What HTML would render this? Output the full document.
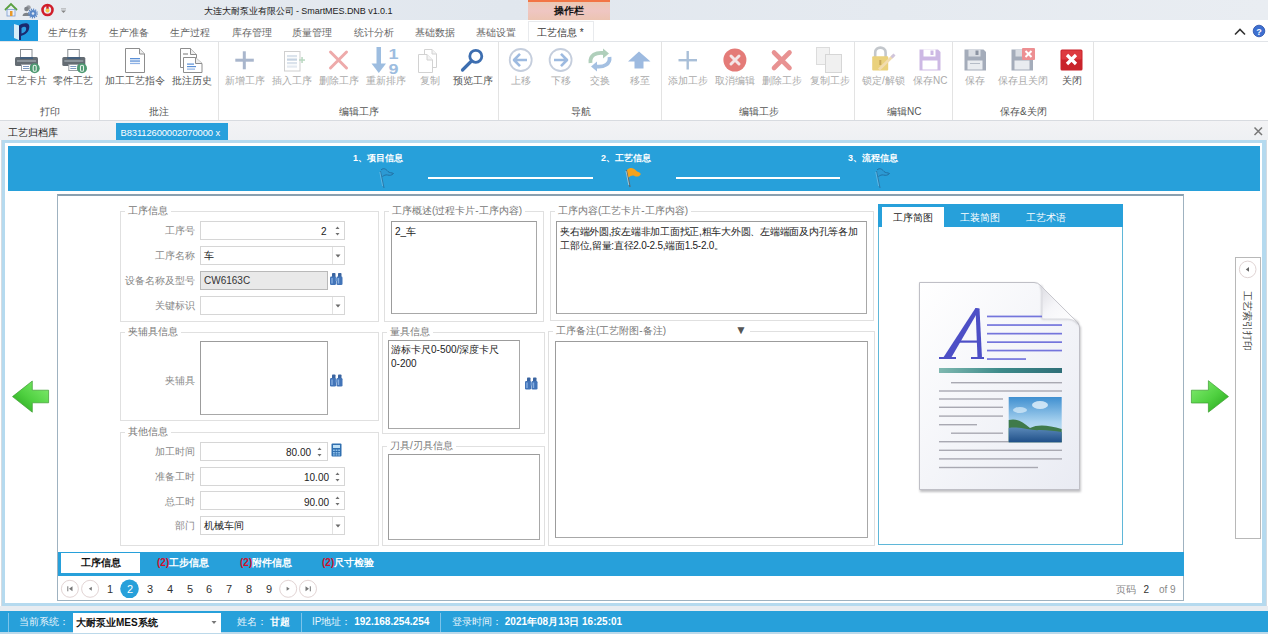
<!DOCTYPE html>
<html><head><meta charset="utf-8">
<style>
*{box-sizing:border-box;margin:0;padding:0}
html,body{width:1268px;height:634px;overflow:hidden;background:#fff;font-family:"Liberation Sans",sans-serif;font-size:10px;color:#333}
.a{position:absolute}
.t{position:absolute;white-space:nowrap;line-height:12px}
#title{left:0;top:0;width:1268px;height:20px;background:linear-gradient(90deg,#e8ecf1 0%,#e1e7ee 40%,#e9edf2 100%)}
#menu{left:0;top:20px;width:1268px;height:21px;background:#fff}
.mi{position:absolute;top:26.5px;color:#666;font-size:10px;line-height:12px}
#ribbon{left:0;top:41px;width:1268px;height:80px;background:#fff;border-top:1px solid #e1e4e8;border-bottom:1px solid #d8dbe0}
.sep{position:absolute;top:42px;width:1px;height:78px;background:#e3e3e3}
.rl{position:absolute;top:75px;font-size:10px;line-height:12px;color:#aaa;white-space:nowrap}
.rl.on{color:#555}
.gl{position:absolute;top:106px;font-size:10px;line-height:12px;color:#555;white-space:nowrap}
#docstrip{left:0;top:121px;width:1268px;height:19px;background:linear-gradient(#f3f3f5,#eef0f3)}
.gb{position:absolute;border:1px solid #e0e0e0}
.gt{position:absolute;background:#fff;color:#777;font-size:10px;line-height:12px;padding:0 3px;white-space:nowrap}
.lb{position:absolute;color:#888;font-size:10px;line-height:12px;text-align:right;white-space:nowrap}
.inp{position:absolute;border:1px solid #d6d6d6;background:#fff}
.ta{position:absolute;border:1px solid #a8a8a8;border-top-color:#9c9c9c;border-left-color:#9c9c9c;background:#fff}
</style></head><body>
<!-- title bar -->
<div id="title" class="a"></div>
<div class="t" style="left:204px;top:5px;font-size:9px;color:#222;letter-spacing:-0.05px">大连大耐泵业有限公司 - SmartMES.DNB v1.0.1</div>
<div class="a" style="left:528px;top:0;width:82px;height:20px;background:linear-gradient(#ecc9b4,#efc6c2 50%,#ecc4b2);border-top:2px solid #f27545"></div>
<div class="t" style="left:554px;top:5px;font-size:9.5px;color:#111;font-weight:bold">操作栏</div>
<!-- menu -->
<div id="menu" class="a"></div>
<div class="a" style="left:0;top:20px;width:38px;height:21px;background:#1e9be0"></div>
<div class="mi" style="left:48px">生产任务</div>
<div class="mi" style="left:109px">生产准备</div>
<div class="mi" style="left:170px">生产过程</div>
<div class="mi" style="left:232px">库存管理</div>
<div class="mi" style="left:292px">质量管理</div>
<div class="mi" style="left:354px">统计分析</div>
<div class="mi" style="left:415px">基础数据</div>
<div class="mi" style="left:476px">基础设置</div>
<div class="a" style="left:528px;top:21px;width:66px;height:21px;background:#fff;border:1px solid #e8eaed;border-bottom:none"></div>
<div class="mi" style="left:537px;color:#333">工艺信息 *</div>
<!-- ribbon -->
<div id="ribbon" class="a"></div>
<div class="sep" style="left:99px"></div>
<div class="sep" style="left:218px"></div>
<div class="sep" style="left:498px"></div>
<div class="sep" style="left:661px"></div>
<div class="sep" style="left:854px"></div>
<div class="sep" style="left:952px"></div>
<div class="sep" style="left:1093px"></div>
<div class="rl on" style="left:7px">工艺卡片</div>
<div class="rl on" style="left:53px">零件工艺</div>
<div class="rl on" style="left:105px">加工工艺指令</div>
<div class="rl on" style="left:172px">批注历史</div>
<div class="rl" style="left:225px">新增工序</div>
<div class="rl" style="left:272px">插入工序</div>
<div class="rl" style="left:319px">删除工序</div>
<div class="rl" style="left:366px">重新排序</div>
<div class="rl" style="left:420px">复制</div>
<div class="rl on" style="left:453px">预览工序</div>
<div class="rl" style="left:511px">上移</div>
<div class="rl" style="left:551px">下移</div>
<div class="rl" style="left:590px">交换</div>
<div class="rl" style="left:630px">移至</div>
<div class="rl" style="left:668px">添加工步</div>
<div class="rl" style="left:715px">取消编辑</div>
<div class="rl" style="left:762px">删除工步</div>
<div class="rl" style="left:810px">复制工步</div>
<div class="rl" style="left:862px">锁定/解锁</div>
<div class="rl" style="left:913px">保存NC</div>
<div class="rl" style="left:965px">保存</div>
<div class="rl" style="left:998px">保存且关闭</div>
<div class="rl on" style="left:1062px">关闭</div>
<div class="gl" style="left:40px">打印</div>
<div class="gl" style="left:149px">批注</div>
<div class="gl" style="left:339px">编辑工序</div>
<div class="gl" style="left:571px">导航</div>
<div class="gl" style="left:739px">编辑工步</div>
<div class="gl" style="left:887px">编辑NC</div>
<div class="gl" style="left:1000px">保存&amp;关闭</div>
<!-- doc strip -->
<div id="docstrip" class="a"></div>
<div class="t" style="left:8px;top:126.5px;color:#222">工艺归档库</div>
<div class="a" style="left:116px;top:123px;width:112px;height:17px;background:#28a0dc"></div>
<div class="t" style="left:120.5px;top:126.5px;color:#fff;font-size:9.4px;letter-spacing:-0.1px">B83112600002070000 x</div>

<!-- main frame -->
<div class="a" style="left:1px;top:140px;width:1266px;height:467px;border:1px solid #d3dbe2;border-top:none;background:#fff"></div><div class="a" style="left:2px;top:140px;width:1264px;height:466px;border:3px solid #b5daef;border-right-width:4px;background:#fff"></div>
<div class="a" style="left:8px;top:146px;width:1252px;height:45px;background:#27a0da"></div>
<div class="a" style="left:57px;top:194px;width:1127px;height:407px;border:1px solid #9fb2c0;border-top:2px solid #8aa0b0;background:#fff"></div>
<!-- status bar -->
<div class="a" style="left:0;top:606px;width:1268px;height:28px;background:#e7ecf1"></div>
<div class="a" style="left:0;top:611px;width:1268px;height:21px;background:#27a0da"></div><div class="a" style="left:0;top:632px;width:1268px;height:2px;background:#bcd9ea"></div>

<!-- column 1 -->
<div class="gb" style="left:120px;top:211px;width:259px;height:111px"></div>
<div class="gt" style="left:125px;top:205px">工序信息</div>
<div class="lb" style="left:120px;top:225px;width:75px">工序号</div>
<div class="inp" style="left:200px;top:221px;width:145px;height:19px"></div>
<div class="t" style="left:321px;top:226px;color:#222">2</div>
<div class="lb" style="left:120px;top:250px;width:75px">工序名称</div>
<div class="inp" style="left:200px;top:246px;width:145px;height:19px"></div>
<div class="a" style="left:332px;top:247px;width:1px;height:17px;background:#e2e2e2"></div>
<div class="t" style="left:204px;top:250px;color:#222">车</div>
<div class="lb" style="left:110px;top:275px;width:85px">设备名称及型号</div>
<div class="inp" style="left:200px;top:271px;width:128px;height:19px;background:#e9e9e9;border-color:#b9b9b9"></div>
<div class="t" style="left:204px;top:275px;color:#333">CW6163C</div>
<div class="lb" style="left:120px;top:300px;width:75px">关键标识</div>
<div class="inp" style="left:200px;top:296px;width:145px;height:19px"></div>
<div class="a" style="left:332px;top:297px;width:1px;height:17px;background:#e2e2e2"></div>

<div class="gb" style="left:120px;top:332px;width:259px;height:89px"></div>
<div class="gt" style="left:125px;top:326px">夹辅具信息</div>
<div class="lb" style="left:120px;top:375px;width:75px">夹辅具</div>
<div class="ta" style="left:200px;top:341px;width:128px;height:74px"></div>

<div class="gb" style="left:120px;top:432px;width:259px;height:114px"></div>
<div class="gt" style="left:125px;top:426px">其他信息</div>
<div class="lb" style="left:120px;top:446px;width:75px">加工时间</div>
<div class="inp" style="left:200px;top:442px;width:128px;height:19px"></div>
<div class="t" style="left:286px;top:447px;color:#222">80.00</div>
<div class="lb" style="left:120px;top:471px;width:75px">准备工时</div>
<div class="inp" style="left:200px;top:467px;width:145px;height:19px"></div>
<div class="t" style="left:304px;top:472px;color:#222">10.00</div>
<div class="lb" style="left:120px;top:496px;width:75px">总工时</div>
<div class="inp" style="left:200px;top:491px;width:145px;height:19px"></div>
<div class="t" style="left:304px;top:496.5px;color:#222">90.00</div>
<div class="lb" style="left:120px;top:520px;width:75px">部门</div>
<div class="inp" style="left:200px;top:516px;width:145px;height:19px"></div>
<div class="a" style="left:332px;top:517px;width:1px;height:17px;background:#e2e2e2"></div>
<div class="t" style="left:204px;top:520px;color:#222">机械车间</div>

<!-- column 2 -->
<div class="gb" style="left:384px;top:211px;width:160px;height:111px"></div>
<div class="gt" style="left:389px;top:205px">工序概述(过程卡片-工序内容)</div>
<div class="ta" style="left:391px;top:221px;width:146px;height:93px"></div>
<div class="t" style="left:395px;top:226px;color:#222">2_车</div>

<div class="gb" style="left:382px;top:332px;width:163px;height:102px"></div>
<div class="gt" style="left:387px;top:326px">量具信息</div>
<div class="ta" style="left:388px;top:340px;width:132px;height:89px"></div>
<div class="t" style="left:391px;top:343px;color:#222;line-height:14px">游标卡尺0-500/深度卡尺<br>0-200</div>

<div class="gb" style="left:382px;top:446px;width:163px;height:100px"></div>
<div class="gt" style="left:387px;top:440px">刀具/刃具信息</div>
<div class="ta" style="left:388px;top:454px;width:152px;height:86px"></div>

<!-- column 3 -->
<div class="gb" style="left:550px;top:211px;width:324px;height:110px"></div>
<div class="gt" style="left:555px;top:205px">工序内容(工艺卡片-工序内容)</div>
<div class="ta" style="left:556px;top:221px;width:311px;height:93px"></div>
<div class="t" style="left:560px;top:225px;color:#222;line-height:14px;letter-spacing:-0.25px">夹右端外圆,按左端非加工面找正,粗车大外圆、左端端面及内孔等各加<br>工部位,留量:直径2.0-2.5,端面1.5-2.0。</div>

<div class="gb" style="left:548px;top:331px;width:327px;height:215px"></div>
<div class="gt" style="left:553px;top:325px;width:196px">工序备注(工艺附图-备注)</div>
<div class="gt" style="left:732px;top:324px;color:#555;font-size:12px">▼</div>
<div class="ta" style="left:555px;top:341px;width:313px;height:197px"></div>

<!-- image panel -->
<div class="a" style="left:878px;top:204px;width:245px;height:341px;border:1px solid #5fb7d8;background:#fff"></div>
<div class="a" style="left:878px;top:204px;width:245px;height:23px;background:#27a0da"></div>
<div class="a" style="left:882px;top:207px;width:62px;height:20px;background:#fff"></div>
<div class="t" style="left:893px;top:212px;color:#222">工序简图</div>
<div class="t" style="left:960px;top:212px;color:#fff">工装简图</div>
<div class="t" style="left:1026px;top:212px;color:#fff">工艺术语</div>

<!-- bottom tabs -->
<div class="a" style="left:58px;top:552px;width:1126px;height:24px;background:#27a0da"></div>
<div class="a" style="left:61px;top:553px;width:79px;height:20px;background:#fff"></div>
<div class="t" style="left:81px;top:557px;color:#111;font-weight:bold">工序信息</div>
<div class="t" style="left:157px;top:557px;color:#fff;font-weight:bold"><span style="color:#d0102a">(2)</span>工步信息</div>
<div class="t" style="left:240px;top:557px;color:#fff;font-weight:bold"><span style="color:#d0102a">(2)</span>附件信息</div>
<div class="t" style="left:322px;top:557px;color:#fff;font-weight:bold"><span style="color:#d0102a">(2)</span>尺寸检验</div>

<!-- pager -->
<div class="t" style="left:1116px;top:583.5px;color:#888">页码</div><div class="t" style="left:1143.5px;top:583.5px;color:#333">2</div><div class="t" style="left:1159px;top:583.5px;color:#888">of 9</div>

<!-- status -->
<div class="t" style="left:19px;top:616px;color:#e8f4fb">当前系统：</div>
<div class="a" style="left:73px;top:613px;width:148px;height:20px;background:#fff"></div>
<div class="t" style="left:76px;top:617px;color:#111;font-weight:bold">大耐泵业MES系统</div>
<div class="t" style="left:237px;top:616px;color:#e8f4fb">姓名：&nbsp;<b style="color:#fff">甘超</b></div>
<div class="t" style="left:312px;top:616px;color:#e8f4fb">IP地址：&nbsp;<b style="color:#fff">192.168.254.254</b></div>
<div class="t" style="left:452px;top:616px;color:#e8f4fb">登录时间：&nbsp;<b style="color:#fff">2021年08月13日 16:25:01</b></div>
<div class="a" style="left:8px;top:613px;width:1px;height:19px;background:#7cc4ea"></div>
<div class="a" style="left:301px;top:613px;width:1px;height:19px;background:#7cc4ea"></div>
<div class="a" style="left:440px;top:613px;width:1px;height:19px;background:#7cc4ea"></div>

<!-- step header -->
<div class="t" style="left:353px;top:152px;color:#fff;font-weight:bold;font-size:9px">1、项目信息</div>
<div class="t" style="left:601px;top:152px;color:#fff;font-weight:bold;font-size:9px">2、工艺信息</div>
<div class="t" style="left:848px;top:152px;color:#fff;font-weight:bold;font-size:9px">3、流程信息</div>
<div class="a" style="left:428px;top:177px;width:165px;height:2px;background:#fff"></div>
<div class="a" style="left:676px;top:177px;width:164px;height:2px;background:#fff"></div>
<svg class="a" style="left:0;top:0" width="1268" height="634" viewBox="0 0 1268 634">
 <path d="M380.5 171 L384 188" stroke="#2f6a96" stroke-width="1.1" opacity=".7"/>
 <path d="M379.8 172 L382.6 186" stroke="#bfe3f7" stroke-width=".6" opacity=".6"/>
 <path d="M381 170 C383.5 167.5 386 169 388 171.5 C389.5 173 391.5 172.5 393.5 173.5 C392 175.5 389.5 175.5 387.5 175 C385.5 174.5 384 175.5 382.5 176.5" fill="#3b8cc6" fill-opacity=".35" stroke="#1f5f8f" stroke-width="1" opacity=".75"/>
 <path d="M626.5 170 L630 187" stroke="#5a6a72" stroke-width="1.3"/>
 <path d="M626 171 L628.8 185" stroke="#e8f0f4" stroke-width=".7" opacity=".8"/>
 <path d="M627 170 C630 166.5 634 168 636 170.5 C637.5 172.5 639.5 171.5 640.8 174 C639.5 177 636.5 177 634.5 176 C632.5 175 630.5 176 628.5 177.5 Z" fill="#f5a21c"/>
 <path d="M876.5 171 L880 188" stroke="#2f6a96" stroke-width="1.1" opacity=".7"/>
 <path d="M875.8 172 L878.6 186" stroke="#bfe3f7" stroke-width=".6" opacity=".6"/>
 <path d="M877 170 C879.5 167.5 882 169 884 171.5 C885.5 173 887.5 172.5 889.5 173.5 C888 175.5 885.5 175.5 883.5 175 C881.5 174.5 880 175.5 878.5 176.5" fill="#3b8cc6" fill-opacity=".35" stroke="#1f5f8f" stroke-width="1" opacity=".75"/>
</svg>
<!-- ribbon icons overlay -->
<svg class="a" style="left:0;top:0" width="1268" height="634" viewBox="0 0 1268 634">
 <defs>
  <g id="printer">
   <rect x="20.5" y="49.5" width="11.5" height="9" fill="#fff" stroke="#8a8f94"/>
   <rect x="15" y="57" width="23" height="9" rx="1.5" fill="#646c73"/>
   <rect x="20" y="57" width="13" height="2" fill="#44607e"/>
   <rect x="17" y="60" width="19" height="2" fill="#8b949b"/>
   <rect x="21.5" y="64.5" width="9" height="6" fill="#fff" stroke="#9aa0a6"/>
   <rect x="23" y="66" width="6" height="1" fill="#7c98c0"/>
   <rect x="23" y="68" width="6" height="1" fill="#7c98c0"/>
   <circle cx="34.7" cy="68.3" r="5" fill="#4e9a72"/>
   <rect x="33.2" y="65.3" width="3" height="6" rx="1.4" fill="none" stroke="#e8f4ec" stroke-width="1.1"/>
  </g>
  <g id="floppy">
   <path d="M0 0 H18 L21 3 V21 H0 Z" />
  </g>
 </defs>
 <use href="#printer"/>
 <use href="#printer" x="47.3"/>
 <!-- doc 加工工艺指令 -->
 <path d="M125.5 48.5 H139.5 L144.5 54 V72.5 H125.5 Z" fill="#fff" stroke="#8d8d8d"/>
 <path d="M139.5 48.5 V54 H144.5" fill="#eee" stroke="#8d8d8d"/>
 <rect x="130" y="58" width="10" height="1.3" fill="#5a8fd6"/>
 <rect x="130" y="60.4" width="10" height="1.3" fill="#5a8fd6"/>
 <rect x="130" y="62.8" width="10" height="1.3" fill="#8fb3e6"/>
 <!-- 批注历史 -->
 <path d="M180.5 48.5 H190.5 L196.5 54.5 V67.5 H180.5 Z" fill="#fff" stroke="#8d8d8d"/>
 <path d="M190.5 48.5 V54.5 H196.5" fill="#eee" stroke="#8d8d8d"/>
 <rect x="183" y="53.5" width="5" height="1" fill="#777"/>
 <path d="M183.5 57.5 H195.5 L202 63.5 V72.5 H183.5 Z" fill="#fff" stroke="#8d8d8d"/>
 <path d="M195.5 57.5 V63.5 H202" fill="#eee" stroke="#8d8d8d"/>
 <rect x="187" y="63.5" width="7" height="1.2" fill="#5a8fd6"/>
 <rect x="187" y="66" width="9" height="1.2" fill="#5a8fd6"/>
 <rect x="187" y="68.5" width="8" height="1.2" fill="#8fb3e6"/>
 <!-- 新增工序 plus -->
 <rect x="242.8" y="51.3" width="3" height="18" fill="#a9b6cc"/>
 <rect x="235.3" y="58.7" width="18.5" height="3" fill="#a9b6cc"/>
 <!-- 插入工序 -->
 <rect x="284.5" y="51.5" width="15.5" height="19.5" fill="#fff" stroke="#cfcfcf"/>
 <rect x="287" y="55" width="10" height="2.2" fill="#dbe3ec"/>
 <rect x="287" y="58.5" width="10" height="2.2" fill="#c6d3e2"/>
 <rect x="287" y="62" width="10" height="2.2" fill="#dbe3ec"/>
 <rect x="287" y="65.5" width="10" height="2.2" fill="#e4eaf1"/>
 <rect x="299" y="59.3" width="6" height="1.5" fill="#b8d8c0"/>
 <rect x="301.3" y="57" width="1.5" height="6" fill="#b8d8c0"/>
 <!-- 删除工序 X -->
 <path d="M330.5 52 L346.5 68 M346.5 52 L330.5 68" stroke="#eeaaaa" stroke-width="3" stroke-linecap="round"/>
 <!-- 重新排序 -->
 <rect x="376.5" y="47" width="4.5" height="19" fill="#9dbde0"/>
 <path d="M371.5 63.5 H386 L378.8 73 Z" fill="#9dbde0"/>
 <text x="388.5" y="58.5" font-family="Liberation Sans" font-weight="bold" font-size="15" fill="#9dbde0" textLength="10" lengthAdjust="spacingAndGlyphs">1</text>
 <text x="388.5" y="73.5" font-family="Liberation Sans" font-weight="bold" font-size="15" fill="#9dbde0" textLength="10" lengthAdjust="spacingAndGlyphs">9</text>
 <!-- 复制 -->
 <path d="M424.5 49.5 H432 L436.5 54 V67.5 H424.5 Z" fill="#fff" stroke="#d2d2d2"/>
 <path d="M418.5 54.5 H427 L432.5 60 V72.5 H418.5 Z" fill="#fff" stroke="#d2d2d2"/>
 <path d="M427 54.5 V60 H432.5" fill="#f3f3f3" stroke="#d2d2d2"/>
 <path d="M432 49.5 V54 H436.5" fill="#f3f3f3" stroke="#d2d2d2"/>
 <!-- 预览 magnifier -->
 <circle cx="475.8" cy="56.3" r="6" fill="none" stroke="#3d6eb0" stroke-width="2.8"/>
 <path d="M471.5 61 L462.5 70" stroke="#3d6eb0" stroke-width="3.2" stroke-linecap="round"/>
 <!-- 上移 / 下移 -->
 <circle cx="520.7" cy="60" r="11" fill="#fff" stroke="#c5cedd" stroke-width="1.8"/>
 <path d="M514 60 H527 M520 53.8 L514 60 L520 66.2" fill="none" stroke="#9dbae0" stroke-width="2.6" stroke-linejoin="round"/>
 <circle cx="560.6" cy="60" r="11" fill="#fff" stroke="#c5cedd" stroke-width="1.8"/>
 <path d="M554 60 H567 M561 53.8 L567 60 L561 66.2" fill="none" stroke="#9dbae0" stroke-width="2.6" stroke-linejoin="round"/>
 <!-- 交换 -->
 <path d="M590.5 63 C589.5 55 596 52 604 53" fill="none" stroke="#b0cfbb" stroke-width="3.8"/>
 <path d="M603 48.5 L609 53.5 L603 58.5 Z" fill="#b0cfbb"/>
 <path d="M609.5 57 C610.5 64 604 67.5 596 66.5" fill="none" stroke="#a4c0e2" stroke-width="3.8"/>
 <path d="M597 61.5 L591 66.5 L597 71.5 Z" fill="#a4c0e2"/>
 <!-- 移至 up arrow -->
 <path d="M639 51.5 L650.5 61.5 H643.5 V68.5 H634.5 V61.5 H628 Z" fill="#9dbae0"/>
 <!-- 添加工步 plus -->
 <rect x="686.5" y="51" width="2.4" height="18.5" fill="#a9bfd8"/>
 <rect x="678.5" y="59" width="18.5" height="2.4" fill="#a9bfd8"/>
 <!-- 取消编辑 -->
 <circle cx="734.9" cy="60" r="11.5" fill="#e47b78"/>
 <path d="M731 56 L739 64 M739 56 L731 64" stroke="#f4e6e8" stroke-width="3" stroke-linecap="round"/>
 <!-- 删除工步 -->
 <path d="M774 52.5 L789.5 68 M789.5 52.5 L774 68" stroke="#e89292" stroke-width="4.6" stroke-linecap="round"/>
 <!-- 复制工步 -->
 <rect x="816.5" y="47.5" width="13" height="17" fill="#f2f2f2" stroke="#dcdcdc"/>
 <rect x="825.5" y="54.5" width="16" height="18" fill="#f0f0f0" stroke="#d6d6d6"/>
 <!-- lock -->
 <path d="M875.2 57 V52.5 C875.2 46 885.6 46 885.6 52.5 V57" fill="none" stroke="#c3c7cc" stroke-width="2.6"/>
 <rect x="872.2" y="56.3" width="16" height="14.2" rx="1" fill="#ead17c"/>
 <rect x="879.3" y="60" width="2" height="5" fill="#c8a85a"/>
 <path d="M879 69.5 L893.5 55.5" stroke="#f2dcae" stroke-width="2.8"/>
 <path d="M891.5 57.5 L894.5 54.5" stroke="#cfc4dc" stroke-width="2.8"/>
 <!-- save NC -->
 <path d="M919.5 49.5 H938 L940.5 52 V70.5 H919.5 Z" fill="#cdb9e4"/>
 <rect x="923.5" y="49.5" width="12" height="7" fill="#fff"/>
 <rect x="930.5" y="50.5" width="3" height="4.5" fill="#cdb9e4"/>
 <rect x="922.5" y="60.5" width="15" height="9" fill="#fff"/>
 <!-- save -->
 <path d="M964.5 49.5 H983.5 L986 52 V70.5 H964.5 Z" fill="#a4acba"/>
 <rect x="968.5" y="49.5" width="12" height="7" fill="#d9dde3"/>
 <rect x="975.5" y="50.5" width="3" height="4.5" fill="#8c94a2"/>
 <rect x="967.5" y="60.5" width="15" height="9" fill="#e9ecf0"/>
 <rect x="970" y="63" width="10" height="1" fill="#b5bcc7"/>
 <!-- save & close -->
 <path d="M1011.5 49.5 H1030.5 L1033 52 V70.5 H1011.5 Z" fill="#a4acba"/>
 <rect x="1015.5" y="49.5" width="12" height="7" fill="#d9dde3"/>
 <rect x="1014.5" y="60.5" width="15" height="9" fill="#e9ecf0"/>
 <rect x="1022" y="48" width="13" height="12" rx="1" fill="#ed8f92"/>
 <path d="M1025.5 51 L1031.5 57 M1031.5 51 L1025.5 57" stroke="#fff" stroke-width="2"/>
 <!-- close -->
 <rect x="1060.5" y="49.5" width="22" height="21" rx="1.5" fill="#c9232a"/>
 <rect x="1061.5" y="50.5" width="20" height="9" rx="1" fill="#dd3a3f"/>
 <path d="M1067 55 L1076 64 M1076 55 L1067 64" stroke="#fff" stroke-width="3.2"/>
</svg>

<!-- misc overlay -->
<svg class="a" style="left:0;top:0" width="1268" height="634" viewBox="0 0 1268 634">
 <defs>
  <linearGradient id="garr" x1="0" y1="0" x2="1" y2="1">
   <stop offset="0" stop-color="#86ee74"/><stop offset=".55" stop-color="#4fd040"/><stop offset="1" stop-color="#22a018"/>
  </linearGradient>
  <linearGradient id="garr2" x1="1" y1="0" x2="0" y2="1">
   <stop offset="0" stop-color="#86ee74"/><stop offset=".55" stop-color="#4fd040"/><stop offset="1" stop-color="#22a018"/>
  </linearGradient>
  <g id="binoc">
   <rect x="2" y="0" width="3.5" height="5" rx=".8" fill="#3a64a0"/>
   <rect x="8" y="0" width="3.5" height="5" rx=".8" fill="#3a64a0"/>
   <rect x="0" y="3.5" width="6" height="8.5" rx="1.3" fill="#4274b8"/>
   <rect x="6.5" y="3.5" width="6" height="8.5" rx="1.3" fill="#4274b8"/>
   <rect x="5.5" y="5" width="2" height="3" fill="#6d98d0"/>
   <rect x="1.3" y="5" width="1.4" height="5.5" fill="#86aee0"/>
   <rect x="7.8" y="5" width="1.4" height="5.5" fill="#86aee0"/>
  </g>
  <g id="spin">
   <path d="M0.5 3 L2.5 0.5 L4.5 3 Z" fill="#707070"/>
   <path d="M0.5 7 L2.5 9.5 L4.5 7 Z" fill="#707070"/>
  </g>
  <g id="dd"><path d="M0.5 0.5 H5.5 L3 3.5 Z" fill="#6a6a6a"/></g>
 </defs>
 <!-- green arrows -->
 <path d="M12.5 396.6 L32.3 381 V390.2 H48.6 V402.8 H32.3 V412.2 Z" fill="url(#garr2)" stroke="#3c9c30" stroke-width=".7" stroke-linejoin="round"/>
 <path d="M1228.5 396.6 L1208.4 380.7 V390.2 H1191.4 V403 H1208.4 V412.2 Z" fill="url(#garr)" stroke="#3c9c30" stroke-width=".7" stroke-linejoin="round"/>
 <!-- binoculars -->
 <use href="#binoc" x="330" y="273"/>
 <use href="#binoc" x="330" y="374.5"/>
 <use href="#binoc" x="525" y="377.5"/>
 <!-- calculator -->
 <rect x="331.5" y="443.5" width="10" height="13" rx="1" fill="#2f6fb0"/>
 <rect x="333" y="445" width="7" height="3" fill="#bfe0f6"/>
 <g fill="#8fc0ea"><rect x="333" y="449.5" width="1.8" height="1.5"/><rect x="335.6" y="449.5" width="1.8" height="1.5"/><rect x="338.2" y="449.5" width="1.8" height="1.5"/><rect x="333" y="452" width="1.8" height="1.5"/><rect x="335.6" y="452" width="1.8" height="1.5"/><rect x="338.2" y="452" width="1.8" height="1.5"/><rect x="333" y="454.3" width="1.8" height="1.2"/><rect x="335.6" y="454.3" width="1.8" height="1.2"/><rect x="338.2" y="454.3" width="1.8" height="1.2"/></g>
 <!-- spinners -->
 <use href="#spin" x="335" y="226"/>
 <use href="#spin" x="317" y="447"/>
 <use href="#spin" x="335" y="472"/>
 <use href="#spin" x="335" y="496"/>
 <!-- dropdown arrows -->
 <use href="#dd" x="335" y="254"/>
 <use href="#dd" x="335" y="304"/>
 <use href="#dd" x="335" y="524"/>
 <path d="M211.5 621 H216.5 L214 624 Z" fill="#777"/>
</svg>

<!-- document preview -->
<svg class="a" style="left:0;top:0" width="1268" height="634" viewBox="0 0 1268 634">
 <defs>
  <linearGradient id="pg" x1="0" y1="0" x2="1" y2="1">
   <stop offset="0" stop-color="#ffffff"/><stop offset="1" stop-color="#e9ebf3"/>
  </linearGradient>
  <linearGradient id="teal" x1="0" y1="0" x2="1" y2="0">
   <stop offset="0" stop-color="#7fb8b0"/><stop offset=".5" stop-color="#3d8a8a"/><stop offset="1" stop-color="#2f6f78"/>
  </linearGradient>
  <linearGradient id="sky" x1="0" y1="0" x2="0" y2="1">
   <stop offset="0" stop-color="#3f8fd0"/><stop offset=".55" stop-color="#a8d2ef"/><stop offset="1" stop-color="#d8ecf8"/>
  </linearGradient>
  <linearGradient id="water" x1="0" y1="0" x2="0" y2="1">
   <stop offset="0" stop-color="#5a88b8"/><stop offset="1" stop-color="#1f4f88"/>
  </linearGradient>
  <linearGradient id="curl" x1="0" y1="0" x2="1" y2="1">
   <stop offset="0" stop-color="#dcdce2"/><stop offset=".45" stop-color="#f6f6f9"/><stop offset="1" stop-color="#ffffff"/>
  </linearGradient>
  <filter id="sh" x="-10%" y="-10%" width="120%" height="120%"><feGaussianBlur stdDeviation="1.3"/></filter>
 </defs>
 <path d="M919 282 H1035 L1080 326 V491 H919 Z" fill="#8a8a90" opacity=".55" filter="url(#sh)" transform="translate(0.8,1)"/>
 <path d="M919.5 282.5 H1034 Q1038 282.5 1040.5 285.5 L1077.5 322.5 Q1079.5 325 1079.5 328 V489.5 H919.5 Z" fill="url(#pg)" stroke="#bfbfc6"/>
 <path d="M1040.5 285.5 Q1042.5 288 1042.5 292 V318.5 H1068 Q1075 318.5 1078.5 324" fill="none" stroke="#8f8f96" stroke-width="1.6" opacity=".6" filter="url(#sh)"/>
 <path d="M1040.5 285.5 L1077.5 322.5 Q1073 318.5 1067 318.5 H1042.5 V292 Q1042.5 288 1040.5 285.5 Z" fill="url(#curl)"/>
 <path d="M1040.5 285.5 L1077.5 322.5" stroke="#c8c8ce" stroke-width="1" fill="none"/>
 <g fill="#4d4fc6">
  <path d="M943 358 L951 358 L979.5 309 L975.5 308 Z"/>
  <path d="M975.5 308 L979.5 308.5 L982 358 L977.5 358 Z"/>
  <rect x="957" y="340.5" width="22" height="2.2"/>
  <rect x="939" y="357" width="17" height="2"/>
  <rect x="971" y="357" width="13" height="2"/>
 </g>
 <g fill="#7475dc">
  <rect x="987" y="315.6" width="55" height="1.7"/>
  <rect x="987" y="324.2" width="75" height="1.7"/>
  <rect x="987" y="332.8" width="75" height="1.7"/>
  <rect x="987" y="341.3" width="75" height="1.7"/>
  <rect x="987" y="349.7" width="75" height="1.7"/>
  <rect x="987" y="358.2" width="39" height="1.7"/>
 </g>
 <rect x="939" y="368" width="123" height="5" fill="url(#teal)"/>
 <g fill="#a9a9b2">
  <rect x="951" y="382" width="111" height="1.4"/>
  <rect x="939" y="390.3" width="123" height="1.4"/>
  <rect x="939" y="398.3" width="64" height="1.4"/>
  <rect x="939" y="406.6" width="64" height="1.4"/>
  <rect x="939" y="415.4" width="64" height="1.4"/>
  <rect x="939" y="424" width="38" height="1.4"/>
  <rect x="951" y="432.5" width="52" height="1.4"/>
  <rect x="939" y="441" width="123" height="1.4"/>
  <rect x="939" y="449.6" width="123" height="1.4"/>
  <rect x="939" y="458.2" width="123" height="1.4"/>
  <rect x="939" y="466.8" width="99" height="1.4"/>
 </g>
 <rect x="1008.7" y="397" width="53" height="45.3" fill="url(#sky)"/>
 <path d="M1008.7 420 C1016 418 1022 421 1030 428 C1038 424 1048 425 1061.7 429 V442.3 H1008.7 Z" fill="#3f7a4a"/>
 <path d="M1008.7 428 C1020 426 1030 431 1040 430 C1048 430 1055 431 1061.7 432 V442.3 H1008.7 Z" fill="url(#water)"/>
 <ellipse cx="1040" cy="405" rx="8" ry="4" fill="#e6f2fb" opacity=".8"/>
 <ellipse cx="1020" cy="410" rx="7" ry="3" fill="#dbeefa" opacity=".7"/>
</svg>

<!-- pager, side panel, logo, title icons -->
<svg class="a" style="left:0;top:0" width="1268" height="634" viewBox="0 0 1268 634">
 <g fill="#fff" stroke="#e2d4d4" stroke-width="1">
  <circle cx="69.9" cy="588.8" r="8.5"/>
  <circle cx="90.1" cy="588.8" r="8.5"/>
  <circle cx="288.2" cy="588.8" r="8.5"/>
  <circle cx="308" cy="588.8" r="8.5"/>
 </g>
 <g fill="#777">
  <rect x="67.3" y="586.3" width="1" height="5"/><path d="M72.5 586.3 V591.3 L69 588.8 Z"/>
  <path d="M91.8 586.8 V590.8 L88.8 588.8 Z"/>
  <path d="M286.6 586.8 V590.8 L289.6 588.8 Z"/>
  <path d="M305.5 586.3 V591.3 L309 588.8 Z"/><rect x="309.8" y="586.3" width="1" height="5"/>
 </g>
 <circle cx="129.5" cy="588.8" r="9.3" fill="#27a0da"/>
 <!-- side panel -->
 <rect x="1235.5" y="257.5" width="25" height="281" fill="#fff" stroke="#b8b8b8"/>
 <circle cx="1247.7" cy="269.4" r="8.3" fill="#fff" stroke="#e0d4d4"/>
 <path d="M1249 267 V271.8 L1245.8 269.4 Z" fill="#666"/>
 <!-- logo -->
 <path d="M14 24 L19 25.5 V40 L14 38 Z" fill="#d8ecf8"/>
 <path d="M10 27 L14 24 V38 L10 35 Z" fill="#3d8fd0" opacity=".6"/>
 <path d="M19 25.5 C24 22 31 22 29 29 C28 33 24 35 21 36 V40 L19 40 Z" fill="#1b2a6e"/>
 <path d="M21.5 28 C24 26 27 26.5 26 30 C25.5 32 23.5 33 21.5 33.5 Z" fill="#2f9fe0"/>
 <!-- title icons -->
 <path d="M5 10 L11 4 L17 10" fill="none" stroke="#5aa040" stroke-width="1.8"/>
 <rect x="7" y="9.5" width="8" height="6.5" fill="#e8eef8" stroke="#7a9cd0" stroke-width=".8"/>
 <rect x="10" y="11" width="2.5" height="5" fill="#e89a2a"/>
 <circle cx="28.5" cy="7.5" r="2.2" fill="#9a9ea4"/>
 <circle cx="26.5" cy="9" r="2.3" fill="#7d8288"/>
 <path d="M22.5 16 C22.5 11.5 30.5 11.5 30.5 16 Z" fill="#7d8288"/>
 <circle cx="33" cy="13.5" r="3.6" fill="#5a88c8"/><circle cx="33" cy="13.5" r="4.3" fill="none" stroke="#5a88c8" stroke-width="1.4" stroke-dasharray="1.2 1"/><circle cx="33" cy="13.5" r="1.3" fill="#dfe8f4"/>
 <circle cx="47.5" cy="10" r="5" fill="none" stroke="#d01e2a" stroke-width="2.6"/>
 <path d="M47.5 4 V9" stroke="#d01e2a" stroke-width="2.4"/>
 <circle cx="47.5" cy="10.5" r="2" fill="#f6c84a"/>
 <path d="M61 10.5 H66 L63.5 13 Z" fill="#888"/>
 <rect x="61" y="8.5" width="5" height=".8" fill="#999"/>
 <!-- doc close X -->
 <path d="M1254.5 127.5 L1262 135 M1262 127.5 L1254.5 135" stroke="#777" stroke-width="1.5"/>
 <!-- ribbon collapse & help -->
 <path d="M1235 34.5 L1240 29.5 L1245 34.5" fill="none" stroke="#333" stroke-width="1.6"/>
 <circle cx="1259" cy="31" r="5.8" fill="#3d6fd0"/>
 <circle cx="1259" cy="31" r="5.8" fill="none" stroke="#2a4fa8" stroke-width=".8"/>
 <text x="1256.2" y="35" font-family="Liberation Sans" font-weight="bold" font-size="9" fill="#fff">?</text>
</svg>
<div class="t" style="left:1241px;top:315px;width:60px;height:12px;transform:rotate(90deg);transform-origin:0 0;left:1253px;top:291px;color:#444;font-size:10px">工艺索引打印</div>
<div class="t" style="left:107px;top:583px;color:#333;font-size:11px">1</div>
<div class="t" style="left:127px;top:583px;color:#fff;font-size:11px">2</div>
<div class="t" style="left:147px;top:583px;color:#333;font-size:11px">3</div>
<div class="t" style="left:167px;top:583px;color:#333;font-size:11px">4</div>
<div class="t" style="left:187px;top:583px;color:#333;font-size:11px">5</div>
<div class="t" style="left:206px;top:583px;color:#333;font-size:11px">6</div>
<div class="t" style="left:226px;top:583px;color:#333;font-size:11px">7</div>
<div class="t" style="left:246px;top:583px;color:#333;font-size:11px">8</div>
<div class="t" style="left:266px;top:583px;color:#333;font-size:11px">9</div>
</body></html>
